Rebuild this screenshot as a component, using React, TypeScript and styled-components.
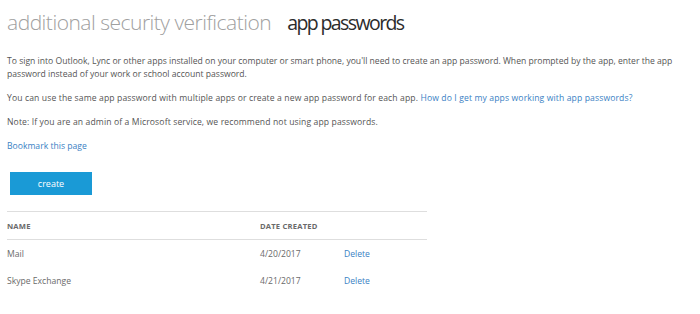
import styled, { createGlobalStyle } from "styled-components";

const GlobalStyle = createGlobalStyle`
	body {
		margin: 0;
		background: #fff;
		font-family: "Open Sans", "Noto Sans", sans-serif;
		color: #505050;
	}
`;

const Page = styled.div`
	padding: 4px 7px 0 7px;
`;

const Titles = styled.div`
	display: flex;
	align-items: baseline;
	gap: 16px;
	height: 36px;
`;

const Title = styled.h1<{ active?: boolean }>`
	margin: 0;
	font-family: "Open Sans", "Noto Sans", sans-serif;
	font-size: ${props => (props.active ? "19.5px" : "21px")};
	font-weight: ${props => (props.active ? 400 : 300)};
	color: ${props => (props.active ? "#2b2b2b" : "#a0a0a0")};
	letter-spacing: ${props => (props.active ? "-1.6px" : "-0.5px")};
	line-height: 36px;
`;

const Text = styled.p<{ wide?: boolean }>`
	margin: 0 0 11px 0;
	font-size: 8.6px;
	line-height: 13px;
	color: #555;
	letter-spacing: ${props => (props.wide ? "0.12px" : "0")};
`;

const Link = styled.a`
	color: #3a7fc4;
	text-decoration: none;
	cursor: pointer;
`;

const Button = styled.button`
	display: block;
	margin: 19px 0 16px 3px;
	width: 82px;
	height: 23px;
	border: none;
	background: #1a9ad6;
	color: #fff;
	font-family: inherit;
	font-size: 9px;
`;

const Table = styled.div`
	width: 420px;
	border-top: 1px solid #dedede;
`;

const Row = styled.div<{ head?: boolean }>`
	display: grid;
	grid-template-columns: 253px 84px 1fr;
	align-items: center;
	height: 27px;
	font-size: ${props => (props.head ? "7.6px" : "8.6px")};
	font-weight: ${props => (props.head ? 700 : 400)};
	color: #6a6a6a;
	border-bottom: ${props => (props.head ? "1px solid #dedede" : "none")};
	letter-spacing: ${props => (props.head ? "0.2px" : "0")};
`;

const rows = [
	{ name: "Mail", date: "4/20/2017" },
	{ name: "Skype Exchange", date: "4/21/2017" },
];

export default function App() {
	return (
		<Page>
			<GlobalStyle />
			<Titles>
				<Title>additional security verification</Title>
				<Title active>app passwords</Title>
			</Titles>
			<Text style={{ marginTop: 15 }}>
				To sign into Outlook, Lync or other apps installed on your computer or smart phone, you'll need to create an app password. When prompted by the app, enter the app password instead of your work or school account password.
			</Text>
			<Text wide>
				You can use the same app password with multiple apps or create a new app password for each app.{" "}
				<Link>How do I get my apps working with app passwords?</Link>
			</Text>
			<Text wide>Note: If you are an admin of a Microsoft service, we recommend not using app passwords.</Text>
			<Text>
				<Link>Bookmark this page</Link>
			</Text>
			<Button>create</Button>
			<Table>
				<Row head>
					<span>NAME</span>
					<span>DATE CREATED</span>
					<span />
				</Row>
				{rows.map(r => (
					<Row key={r.name}>
						<span>{r.name}</span>
						<span>{r.date}</span>
						<Link>Delete</Link>
					</Row>
				))}
			</Table>
		</Page>
	);
}
